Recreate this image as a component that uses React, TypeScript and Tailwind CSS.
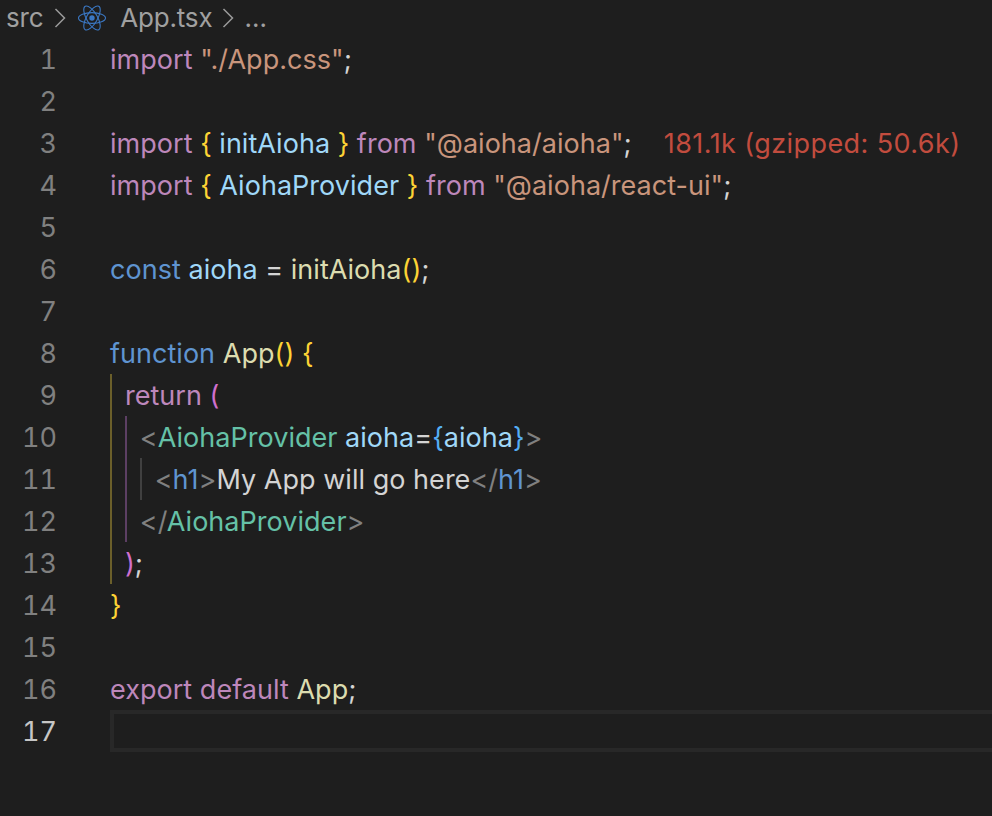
import React from "react";

const C = {
  kw: "text-[#bd87bb]",
  str: "text-[#c9957c]",
  var: "text-[#a0d8f8]",
  blue: "text-[#5f94d0]",
  fn: "text-[#dcdcaf]",
  gold: "text-[#fdd335]",
  pink: "text-[#cf6fcd]",
  tag: "text-[#65c1a7]",
  gray: "text-[#808080]",
  txt: "text-[#d4d4d4]",
  sky: "text-[#55aef5]",
  red: "text-[#c24c3e] tracking-[0.42px]",
};

type Seg = [string, string];
type Line = { guides?: string[]; segs?: Seg[] };

const G1 = "border-[#6b5f2a]";
const G2 = "border-[#5c3f63]";
const G3 = "border-[#404040]";

const lines: Line[] = [
  { segs: [["import ", C.kw], ['"./App.css"', C.str], [";", C.txt]] },
  {},
  {
    segs: [
      ["import ", C.kw], ["{ ", C.gold], ["initAioha", C.var], [" }", C.gold], [" from ", C.kw],
      ['"@aioha/aioha"', C.str], [";", C.txt], ["    181.1k (gzipped: 50.6k)", C.red],
    ],
  },
  {
    segs: [
      ["import ", C.kw], ["{ ", C.gold], ["AiohaProvider", C.var], [" }", C.gold], [" from ", C.kw],
      ['"@aioha/react-ui"', C.str], [";", C.txt],
    ],
  },
  {},
  { segs: [["const ", C.blue], ["aioha", C.var], [" = ", C.txt], ["initAioha", C.fn], ["()", C.gold], [";", C.txt]] },
  {},
  { segs: [["function ", C.blue], ["App", C.fn], ["() ", C.gold], ["{", C.gold]] },
  { guides: [G1], segs: [["return ", C.kw], ["(", C.pink]] },
  {
    guides: [G1, G2],
    segs: [
      ["<", C.gray], ["AiohaProvider", C.tag], [" ", C.txt], ["aioha", C.var], ["=", C.txt],
      ["{", C.sky], ["aioha", C.var], ["}", C.sky], [">", C.gray],
    ],
  },
  {
    guides: [G1, G2, G3],
    segs: [["<", C.gray], ["h1", C.blue], [">", C.gray], ["My App will go here", C.txt], ["</", C.gray], ["h1", C.blue], [">", C.gray]],
  },
  { guides: [G1, G2], segs: [["</", C.gray], ["AiohaProvider", C.tag], [">", C.gray]] },
  { guides: [G1], segs: [[")", C.pink], [";", C.txt]] },
  { segs: [["}", C.gold]] },
  {},
  { segs: [["export default ", C.kw], ["App", C.fn], [";", C.txt]] },
];

function ReactIcon() {
  return (
    <svg width="30" height="30" viewBox="0 0 30 30" fill="none" stroke="#3b78c4" strokeWidth="1.1">
      <ellipse cx="15" cy="15" rx="13.5" ry="5.4" />
      <ellipse cx="15" cy="15" rx="13.5" ry="5.4" transform="rotate(60 15 15)" />
      <ellipse cx="15" cy="15" rx="13.5" ry="5.4" transform="rotate(120 15 15)" />
      <circle cx="15" cy="15" r="2.7" fill="#3b78c4" stroke="none" />
    </svg>
  );
}

function Chevron() {
  return (
    <svg width="12" height="20" viewBox="0 0 12 20" fill="none" stroke="#9a9a9a" strokeWidth="1.5">
      <path d="M1.5 1 L10.5 10 L1.5 19" />
    </svg>
  );
}

function Row({ n, line }: { n: number; line: Line }) {
  return (
    <div className="flex h-[42px] items-center">
      <div className="w-[57px] shrink-0 pt-[3px] text-right text-[#808080] tabular-nums">{n}</div>
      <div className="ml-[53px] flex h-full min-w-0 flex-1 items-center whitespace-pre">
        {(line.guides ?? []).map((g, i) => (
          <span key={i} className={`h-full w-[14.9px] shrink-0 border-l-2 ${g}`} />
        ))}
        <span className="pt-[3px]">
          {(line.segs ?? []).map(([t, c], i) => (
            <span key={i} className={c}>{t}</span>
          ))}
        </span>
      </div>
    </div>
  );
}

export default function App() {
  return (
    <div className="h-[816px] w-[992px] overflow-hidden bg-[#1e1e1e] font-['Inter',sans-serif] text-[27px] tracking-[0.03px]">
      <div className="flex h-[38px] items-center pb-[3px] pl-[6px] text-[26px] tracking-[-0.2px] text-[#a0a0a0]">
        <span>src</span>
        <span className="ml-[11px]"><Chevron /></span>
        <span className="ml-[11px]"><ReactIcon /></span>
        <span className="ml-[13px]">App.tsx</span>
        <span className="ml-[10px]"><Chevron /></span>
        <span className="ml-[10px]">…</span>
      </div>
      {lines.map((l, i) => (
        <Row key={i} n={i + 1} line={l} />
      ))}
      <div className="flex h-[42px] items-center">
        <div className="w-[57px] shrink-0 pt-[3px] text-right text-[#c6c6c6] tabular-nums">17</div>
        <div className="ml-[53px] h-full flex-1 border-4 border-r-0 border-[#282828]" />
      </div>
    </div>
  );
}
